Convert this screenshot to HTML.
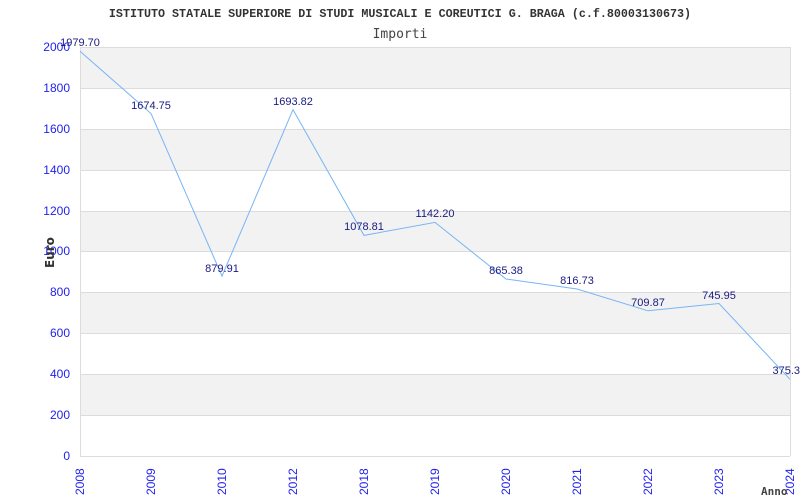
<!DOCTYPE html>
<html><head><meta charset="utf-8"><style>html,body{margin:0;padding:0;background:#fff}svg{display:block}</style></head>
<body>
<svg width="800" height="500" xmlns="http://www.w3.org/2000/svg" font-family="Liberation Sans, Arial, sans-serif">
<text x="400" y="17" text-anchor="middle" font-family="Liberation Mono, monospace" font-weight="bold" font-size="11.7" fill="#333">ISTITUTO STATALE SUPERIORE DI STUDI MUSICALI E COREUTICI G. BRAGA (c.f.80003130673)</text>
<text x="400" y="38" text-anchor="middle" font-family="DejaVu Sans Mono, monospace" font-size="13" fill="#444">Importi</text>
<g fill="#f2f2f2">
<rect x="80" y="47" width="710" height="41"/>
<rect x="80" y="129" width="710" height="41"/>
<rect x="80" y="211" width="710" height="40"/>
<rect x="80" y="292" width="710" height="41"/>
<rect x="80" y="374" width="710" height="41"/>
</g>
<g stroke="#dcdcdc" stroke-width="1">
<line x1="80" y1="47.5" x2="790" y2="47.5"/><line x1="80" y1="88.5" x2="790" y2="88.5"/>
<line x1="80" y1="129.5" x2="790" y2="129.5"/><line x1="80" y1="170.5" x2="790" y2="170.5"/>
<line x1="80" y1="211.5" x2="790" y2="211.5"/><line x1="80" y1="251.5" x2="790" y2="251.5"/>
<line x1="80" y1="292.5" x2="790" y2="292.5"/><line x1="80" y1="333.5" x2="790" y2="333.5"/>
<line x1="80" y1="374.5" x2="790" y2="374.5"/><line x1="80" y1="415.5" x2="790" y2="415.5"/>
<line x1="80" y1="456.5" x2="790" y2="456.5"/>
<line x1="80.5" y1="47" x2="80.5" y2="456"/><line x1="790.5" y1="47" x2="790.5" y2="456"/>
</g>
<g fill="#2222ee" font-size="12" text-anchor="end">
<text x="70" y="51">2000</text><text x="70" y="92">1800</text><text x="70" y="133">1600</text>
<text x="70" y="174">1400</text><text x="70" y="215">1200</text><text x="70" y="255">1000</text>
<text x="70" y="296">800</text><text x="70" y="337">600</text><text x="70" y="378">400</text>
<text x="70" y="419">200</text><text x="70" y="460">0</text>
</g>
<text transform="translate(54,268) rotate(-90)" font-size="12" font-weight="bold" fill="#333" font-family="DejaVu Sans, sans-serif">Euro</text>
<g fill="#2222ee" font-size="12">
<text transform="translate(84,495) rotate(-90)">2008</text>
<text transform="translate(155,495) rotate(-90)">2009</text>
<text transform="translate(226,495) rotate(-90)">2010</text>
<text transform="translate(297,495) rotate(-90)">2012</text>
<text transform="translate(368,495) rotate(-90)">2018</text>
<text transform="translate(439,495) rotate(-90)">2019</text>
<text transform="translate(510,495) rotate(-90)">2020</text>
<text transform="translate(581,495) rotate(-90)">2021</text>
<text transform="translate(652,495) rotate(-90)">2022</text>
<text transform="translate(723,495) rotate(-90)">2023</text>
<text transform="translate(794,495) rotate(-90)">2024</text>
</g>
<text x="761" y="495" font-size="11" font-weight="bold" fill="#444" font-family="DejaVu Sans Mono, monospace">Anno</text>
<polyline fill="none" stroke="#77b5f5" stroke-width="1" points="80,51.2 151,113.5 222,276.1 293,109.6 364,235.4 435,222.4 506,279 577,289 648,310.8 719,303.5 790,379.3"/>
<g fill="#1a1a80" font-size="11" text-anchor="middle">
<text x="80" y="46">1979.70</text><text x="151" y="109">1674.75</text><text x="222" y="272">879.91</text>
<text x="293" y="105">1693.82</text><text x="364" y="230">1078.81</text><text x="435" y="217">1142.20</text>
<text x="506" y="274">865.38</text><text x="577" y="284">816.73</text><text x="648" y="306">709.87</text>
<text x="719" y="299">745.95</text><text x="800" y="374" text-anchor="end">375.3</text>
</g>
</svg>
</body></html>
